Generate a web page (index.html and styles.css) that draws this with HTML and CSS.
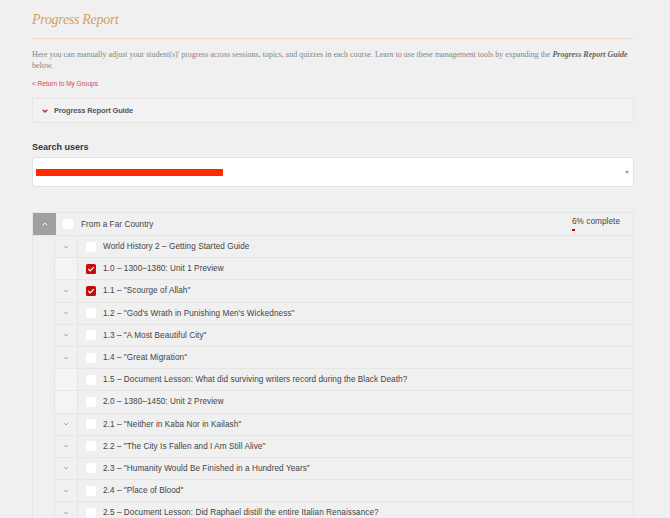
FILE: index.html
```html
<!DOCTYPE html>
<html>
<head>
<meta charset="utf-8">
<link rel="stylesheet" href="styles.css">
</head>
<body>
<div class="page">
  <h1 class="title">Progress Report</h1>
  <p class="intro">Here you can manually adjust your student(s)' progress across sessions, topics, and quizzes in each course. Learn to use these management tools by expanding the <b><i>Progress Report Guide</i></b> below.</p>
  <a class="back" href="#">&lt; Return to My Groups</a>
  <div class="guide">
    <svg class="guide-chev" width="6" height="4" viewBox="0 0 6 4"><polyline points="0.7,0.7 3,3 5.3,0.7" fill="none" stroke="#c62828" stroke-width="1.4"/></svg>
    <span>Progress Report Guide</span>
  </div>
  <div class="search-label">Search users</div>
  <div class="search">
    <div class="redact"></div>
    <svg class="caret" width="4" height="3" viewBox="0 0 4 3"><polygon points="0,0 4,0 2,3" fill="#999"/></svg>
  </div>

  <div class="tree">
    <div class="course">
      <div class="toggle"><svg width="6" height="4" viewBox="0 0 6 4"><polyline points="0.8,3.2 3,1 5.2,3.2" fill="none" stroke="#fff" stroke-width="0.9"/></svg></div>
      <span class="cb"></span>
      <span class="course-name">From a Far Country</span>
      <div class="progress">
        <span>6% complete</span>
        <span class="bar"></span>
      </div>
    </div>
    <div class="children">
      <div class="spacer"></div>
      <div class="rows">
        <div class="row"><span class="chev"><svg width="6" height="4" viewBox="0 0 6 4"><polyline points="0.8,0.8 3,3 5.2,0.8" fill="none" stroke="#999" stroke-width="0.8"/></svg></span><span class="cb"></span><span class="label">World History 2 – Getting Started Guide</span></div>
        <div class="row"><span class="chev empty"></span><span class="cb on"><svg width="8" height="6" viewBox="0 0 8 6"><polyline points="1.3,3 3.2,4.8 6.8,1.2" fill="none" stroke="#fff" stroke-width="1.2"/></svg></span><span class="label">1.0 – 1300–1380: Unit 1 Preview</span></div>
        <div class="row"><span class="chev"><svg width="6" height="4" viewBox="0 0 6 4"><polyline points="0.8,0.8 3,3 5.2,0.8" fill="none" stroke="#999" stroke-width="0.8"/></svg></span><span class="cb on"><svg width="8" height="6" viewBox="0 0 8 6"><polyline points="1.3,3 3.2,4.8 6.8,1.2" fill="none" stroke="#fff" stroke-width="1.2"/></svg></span><span class="label">1.1 – "Scourge of Allah"</span></div>
        <div class="row"><span class="chev"><svg width="6" height="4" viewBox="0 0 6 4"><polyline points="0.8,0.8 3,3 5.2,0.8" fill="none" stroke="#999" stroke-width="0.8"/></svg></span><span class="cb"></span><span class="label">1.2 – "God's Wrath in Punishing Men's Wickedness"</span></div>
        <div class="row"><span class="chev"><svg width="6" height="4" viewBox="0 0 6 4"><polyline points="0.8,0.8 3,3 5.2,0.8" fill="none" stroke="#999" stroke-width="0.8"/></svg></span><span class="cb"></span><span class="label">1.3 – "A Most Beautiful City"</span></div>
        <div class="row"><span class="chev"><svg width="6" height="4" viewBox="0 0 6 4"><polyline points="0.8,0.8 3,3 5.2,0.8" fill="none" stroke="#999" stroke-width="0.8"/></svg></span><span class="cb"></span><span class="label">1.4 – "Great Migration"</span></div>
        <div class="row"><span class="chev empty"></span><span class="cb"></span><span class="label">1.5 – Document Lesson: What did surviving writers record during the Black Death?</span></div>
        <div class="row"><span class="chev empty"></span><span class="cb"></span><span class="label">2.0 – 1380–1450: Unit 2 Preview</span></div>
        <div class="row"><span class="chev"><svg width="6" height="4" viewBox="0 0 6 4"><polyline points="0.8,0.8 3,3 5.2,0.8" fill="none" stroke="#999" stroke-width="0.8"/></svg></span><span class="cb"></span><span class="label">2.1 – "Neither in Kaba Nor in Kailash"</span></div>
        <div class="row"><span class="chev"><svg width="6" height="4" viewBox="0 0 6 4"><polyline points="0.8,0.8 3,3 5.2,0.8" fill="none" stroke="#999" stroke-width="0.8"/></svg></span><span class="cb"></span><span class="label">2.2 – "The City Is Fallen and I Am Still Alive"</span></div>
        <div class="row"><span class="chev"><svg width="6" height="4" viewBox="0 0 6 4"><polyline points="0.8,0.8 3,3 5.2,0.8" fill="none" stroke="#999" stroke-width="0.8"/></svg></span><span class="cb"></span><span class="label">2.3 – "Humanity Would Be Finished in a Hundred Years"</span></div>
        <div class="row"><span class="chev"><svg width="6" height="4" viewBox="0 0 6 4"><polyline points="0.8,0.8 3,3 5.2,0.8" fill="none" stroke="#999" stroke-width="0.8"/></svg></span><span class="cb"></span><span class="label">2.4 – "Place of Blood"</span></div>
        <div class="row"><span class="chev"><svg width="6" height="4" viewBox="0 0 6 4"><polyline points="0.8,0.8 3,3 5.2,0.8" fill="none" stroke="#999" stroke-width="0.8"/></svg></span><span class="cb"></span><span class="label">2.5 – Document Lesson: Did Raphael distill the entire Italian Renaissance?</span></div>
      </div>
    </div>
  </div>
</div>
</body>
</html>
```

FILE: styles.css
```css
html, body {
  margin: 0;
  padding: 0;
  background: #f0f0f0;
}
.page {
  padding: 11px 36px 0 32px;
  font-family: "Liberation Sans", Arial, sans-serif;
}
.title {
  margin: 0;
  font-family: "Liberation Serif", "DejaVu Serif", serif;
  font-style: italic;
  font-weight: normal;
  font-size: 14px;
  letter-spacing: -0.3px;
  color: #d3a062;
  line-height: 18px;
  padding-bottom: 9px;
  border-bottom: 1px solid #ecdcc8;
}
.intro {
  margin: 11px 0 0 0;
  font-family: "Liberation Serif", "DejaVu Serif", serif;
  font-size: 8px;
  line-height: 10.5px;
  color: #858585;
}
.intro b { color: #666; font-weight: bold; }
.back {
  display: block;
  margin-top: 8px;
  font-size: 6.5px;
  color: #d24a45;
  text-decoration: none;
  line-height: 9px;
}
.guide {
  margin-top: 10px;
  height: 23px;
  border: 1px solid #e6e6e6;
  background: #f2f2f2;
  display: flex;
  align-items: center;
  padding-left: 9px;
  font-size: 7.5px;
  font-weight: bold;
  letter-spacing: -0.15px;
  color: #555;
}
.guide-chev { margin-right: 6px; }
.search-label {
  margin-top: 18px;
  font-size: 9px;
  font-weight: bold;
  color: #333;
  line-height: 12px;
}
.search {
  margin-top: 4px;
  height: 28px;
  background: #fff;
  border: 1px solid #e2e2e2;
  border-radius: 3px;
  display: flex;
  align-items: center;
  justify-content: space-between;
  padding: 0 4px 0 3px;
}
.redact {
  width: 187px;
  height: 7px;
  background: #ff2a00;
}
.tree {
  margin-top: 25px;
  border: 1px solid #e6e6e6;
  border-bottom: none;
  font-size: 8.2px;
  color: #444;
  letter-spacing: 0.06px;
}
.course {
  display: flex;
  align-items: center;
  height: 22px;
  border-bottom: 1px solid #e6e6e6;
}
.toggle {
  width: 23px;
  height: 22px;
  background: #a0a0a0;
  display: flex;
  align-items: center;
  justify-content: center;
}
.course .cb { margin-left: 7px; }
.course-name { margin-left: 8px; flex: 1; }
.progress {
  width: 61px;
  align-self: flex-start;
  padding-top: 4px;
  display: flex;
  flex-direction: column;
  line-height: 9px;
}
.bar {
  margin-top: 3px;
  width: 3px;
  height: 2px;
  background: #cc0000;
}
.children { display: flex; }
.spacer { width: 21px; }
.rows {
  flex: 1;
  border-left: 1px solid #e6e6e6;
}
.row {
  display: flex;
  align-items: center;
  height: 21.2px;
  border-bottom: 1px solid #e6e6e6;
}
.chev {
  width: 22px;
  align-self: stretch;
  border-right: 1px solid #e6e6e6;
  display: flex;
  align-items: center;
  justify-content: center;
}
.chev.empty { background: #f4f4f4; }
.cb {
  width: 10px;
  height: 10px;
  background: #fff;
  border-radius: 1.5px;
  display: inline-flex;
  align-items: center;
  justify-content: center;
  flex: none;
}
.row .cb { margin-left: 8px; }
.cb.on { background: #c40e0e; }
.label { margin-left: 7px; white-space: nowrap; }
```
